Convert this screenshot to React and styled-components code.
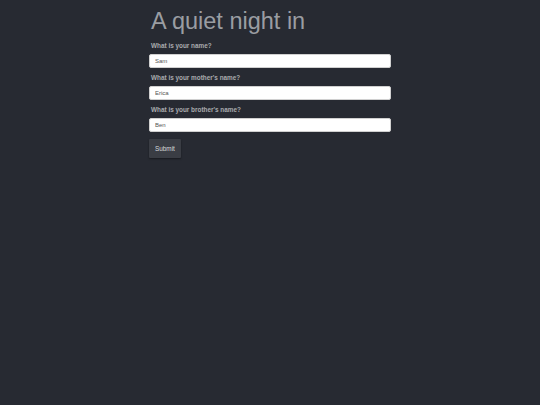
import styled, { createGlobalStyle } from "styled-components";

const GlobalStyle = createGlobalStyle`
  html, body {
    margin: 0;
    padding: 0;
    background: #272a32;
    font-family: "Liberation Sans", Arial, sans-serif;
  }
`;

const Page = styled.main`
  min-height: 405px;
  background: #272a32;
`;

const Container = styled.div`
  width: 242px;
  margin: 0 auto;
  padding-top: 7px;
`;

const Title = styled.h1`
  margin: 0 0 6px 2px;
  font-size: 23.5px;
  font-weight: 400;
  line-height: 28px;
  color: #9a9da2;
`;

const Field = styled.div`
  display: flex;
  flex-direction: column;
  margin-bottom: 5px;
`;

const Label = styled.label`
  font-size: 6.4px;
  font-weight: 700;
  line-height: 9px;
  color: #a9abae;
  margin: 0 0 4px 2px;
`;

const Input = styled.input`
  box-sizing: border-box;
  height: 14px;
  width: 100%;
  border: 1px solid #d0d0d0;
  border-radius: 2px;
  background: #fff;
  padding: 0 5px;
  font-family: "Liberation Sans", Arial, sans-serif;
  font-size: 6px;
  color: #555;
  outline: none;
`;

const Button = styled.button`
  margin-top: 1px;
  height: 19px;
  padding: 0 6px;
  border: none;
  border-radius: 1px;
  background: #3a3d44;
  box-shadow: 0 1px 2px rgba(0, 0, 0, 0.4);
  color: #d8d9db;
  font-family: "Liberation Sans", Arial, sans-serif;
  font-size: 6.4px;
`;

const questions = [
  { id: "name", label: "What is your name?", value: "Sam" },
  { id: "mother", label: "What is your mother's name?", value: "Erica" },
  { id: "brother", label: "What is your brother's name?", value: "Ben" },
];

export default function App() {
  return (
    <Page>
      <GlobalStyle />
      <Container>
        <Title>A quiet night in</Title>
        {questions.map((q) => (
          <Field key={q.id}>
            <Label htmlFor={q.id}>{q.label}</Label>
            <Input id={q.id} defaultValue={q.value} />
          </Field>
        ))}
        <Button type="button">Submit</Button>
      </Container>
    </Page>
  );
}
